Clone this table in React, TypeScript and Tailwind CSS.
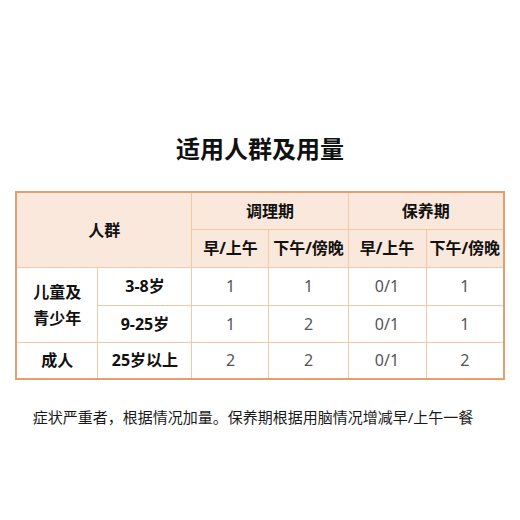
const font = "font-['Noto_Sans','Noto_Sans_CJK_SC',sans-serif]";

const head = "border border-[#f1c9a6] bg-[#fbe8dc] text-[16px] font-bold text-[#111] text-center p-0";
const cell = "border border-[#f1c9a6] text-center p-0";
const label = `${cell} text-[16px] font-bold text-[#111]`;
const num = `${cell} text-[16px] text-[#555]`;

const rows = [
  { age: "3-8岁", v: ["1", "1", "0/1", "1"] },
  { age: "9-25岁", v: ["1", "2", "0/1", "1"] },
];

export default function App() {
  return (
    <div className={`w-[520px] h-[520px] bg-white flex flex-col items-center ${font}`}>
      <h1 className="pt-[136px] text-[24px] leading-[26px] font-bold text-[#111]">
        适用人群及用量
      </h1>
      <table className="mt-[29px] w-[488px] table-fixed border-collapse border-2 border-[#e39f6c]">
        <colgroup>
          <col className="w-[82px]" />
          <col className="w-[94px]" />
          <col className="w-[77px]" />
          <col className="w-[79px]" />
          <col className="w-[78px]" />
          <col className="w-[78px]" />
        </colgroup>
        <thead>
          <tr className="h-[37px]">
            <th colSpan={2} rowSpan={2} className={head}>人群</th>
            <th colSpan={2} className={head}>调理期</th>
            <th colSpan={2} className={head}>保养期</th>
          </tr>
          <tr className="h-[38px]">
            <th className={head}>早/上午</th>
            <th className={head}>下午/傍晚</th>
            <th className={head}>早/上午</th>
            <th className={head}>下午/傍晚</th>
          </tr>
        </thead>
        <tbody>
          {rows.map((r, i) => (
            <tr key={r.age} className={i === 0 ? "h-[38px]" : "h-[37px]"}>
              {i === 0 && (
                <td rowSpan={2} className={`${label} leading-[26px]`}>
                  儿童及
                  <br />
                  青少年
                </td>
              )}
              <td className={label}>{r.age}</td>
              {r.v.map((v, j) => (
                <td key={j} className={num}>{v}</td>
              ))}
            </tr>
          ))}
          <tr className="h-[37px]">
            <td className={label}>成人</td>
            <td className={label}>25岁以上</td>
            <td className={num}>2</td>
            <td className={num}>2</td>
            <td className={num}>0/1</td>
            <td className={num}>2</td>
          </tr>
        </tbody>
      </table>
      <p className="mt-[27px] mr-[14px] text-[15px] leading-[20px] text-[#1a1a1a]">
        症状严重者，根据情况加量。保养期根据用脑情况增减早/上午一餐
      </p>
    </div>
  );
}
